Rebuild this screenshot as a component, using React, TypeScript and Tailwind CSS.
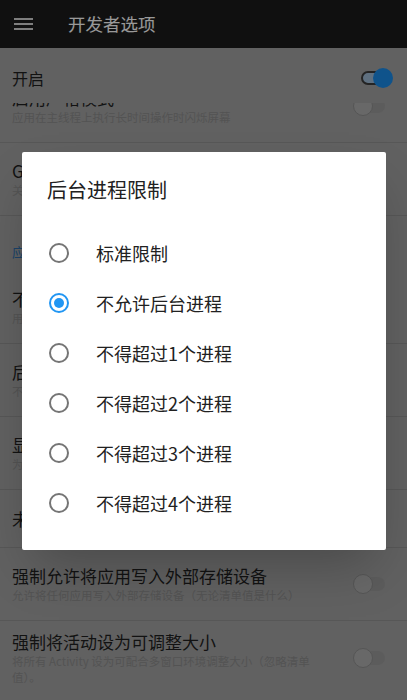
import React, { useState } from 'react';

type Item = { title: string; desc?: string; toggle?: boolean };

const Toggle: React.FC<{ on?: boolean }> = ({ on }) => (
  <div className="relative h-5 w-[34px] shrink-0">
    <div className={`absolute left-[2px] top-[3px] h-[14px] w-[30px] rounded-full ${on ? 'border-2 border-[#3c3c3c] bg-[#9fbbd6]' : 'bg-[#9a9a9a]'}`} />
    <div
      className={`absolute top-0 h-5 w-5 rounded-full ${on ? 'right-0 bg-[#1a8ae8]' : 'left-0 border border-[#8e8e8e] bg-[#adadad]'}`}
    />
  </div>
);

const Row: React.FC<{ item: Item; className?: string }> = ({ item, className = '' }) => (
  <div className={`flex items-center justify-between border-b border-[#929292] pl-3 pr-[20px] ${item.desc ? 'h-[73px]' : 'h-[58px]'} ${className}`}>
    <div className="w-[302px]">
      <p className="text-[17px] leading-[22px] text-[#1e1e1e]">{item.title}</p>
      {item.desc && <p className="text-[11.5px] leading-[16px] text-[#8b8b8b]">{item.desc}</p>}
    </div>
    {item.toggle && <Toggle />}
  </div>
);

const options = ['标准限制', '不允许后台进程', '不得超过1个进程', '不得超过2个进程', '不得超过3个进程', '不得超过4个进程'];

export default function App() {
  const [limit, setLimit] = useState(1);

  return (
    <div className="relative h-[700px] w-[407px] overflow-hidden bg-[#a2a2a2] font-['Noto_Sans_CJK_SC','Noto_Sans',sans-serif]">
      {/* toolbar */}
      <header className="flex h-12 items-center bg-[#1c1c1c] pl-[14px]">
        <div className="flex w-[19px] flex-col gap-[3px]">
          <span className="h-[2px] bg-[#d2d2d2]" />
          <span className="h-[2px] bg-[#d2d2d2]" />
          <span className="h-[2px] bg-[#d2d2d2]" />
        </div>
        <h1 className="ml-[35px] text-[17.5px] text-white">开发者选项</h1>
      </header>

      {/* master switch */}
      <div className="relative z-10 flex h-[55px] items-center justify-between bg-[#a2a2a2] pl-3 pr-[14px] pt-1">
        <span className="text-[16px] text-[#1e1e1e]">开启</span>
        <Toggle on />
      </div>

      {/* settings list */}
      <div className="h-[597px] overflow-hidden">
        <div className="-mt-[33px]">
          <Row item={{ title: '启用严格模式', desc: '应用在主线程上执行长时间操作时闪烁屏幕', toggle: true }} />
          <Row item={{ title: 'GPU 呈现模式分析', desc: '关闭' }} />
          <div className="h-[55px] pl-3 pt-[26px]">
            <p className="text-[13px] leading-5 text-[#2f6fae]">应用</p>
          </div>
          <Row item={{ title: '不保留活动', desc: '用户离开后即销毁每个活动', toggle: true }} />
          <Row item={{ title: '后台进程限制', desc: '不允许后台进程' }} />
          <Row item={{ title: '显示所有“应用无响应”', desc: '为后台应用显示“应用无响应”对话框', toggle: true }} />
          <Row item={{ title: '未使用的应用' }} />
          <Row item={{ title: '强制允许将应用写入外部存储设备', desc: '允许将任何应用写入外部存储设备（无论清单值是什么）', toggle: true }} />
          <Row
            className="border-b-0"
            item={{ title: '强制将活动设为可调整大小', desc: '将所有 Activity 设为可配合多窗口环境调整大小（忽略清单值）。', toggle: true }}
          />
        </div>
      </div>

      {/* scrim */}
      <div className="absolute inset-0 z-20 bg-black/40" />

      {/* dialog */}
      <div className="absolute left-[22px] top-[152px] z-30 h-[398px] w-[364px] rounded-[2px] bg-white pt-6 shadow-2xl">
        <h2 className="pl-[25px] text-[20px] leading-7 text-[#212121]">后台进程限制</h2>
        <ul className="mt-6">
          {options.map((opt, i) => (
            <li key={opt} onClick={() => setLimit(i)} className="flex h-[50px] cursor-pointer items-center pl-[27px]">
              <span
                className={`flex h-5 w-5 items-center justify-center rounded-full border-2 ${i === limit ? 'border-[#2196f3]' : 'border-[#757575]'}`}
              >
                {i === limit && <span className="h-[10px] w-[10px] rounded-full bg-[#2196f3]" />}
              </span>
              <span className="ml-[27px] text-[18px] text-[#212121]">{opt}</span>
            </li>
          ))}
        </ul>
      </div>
    </div>
  );
}
